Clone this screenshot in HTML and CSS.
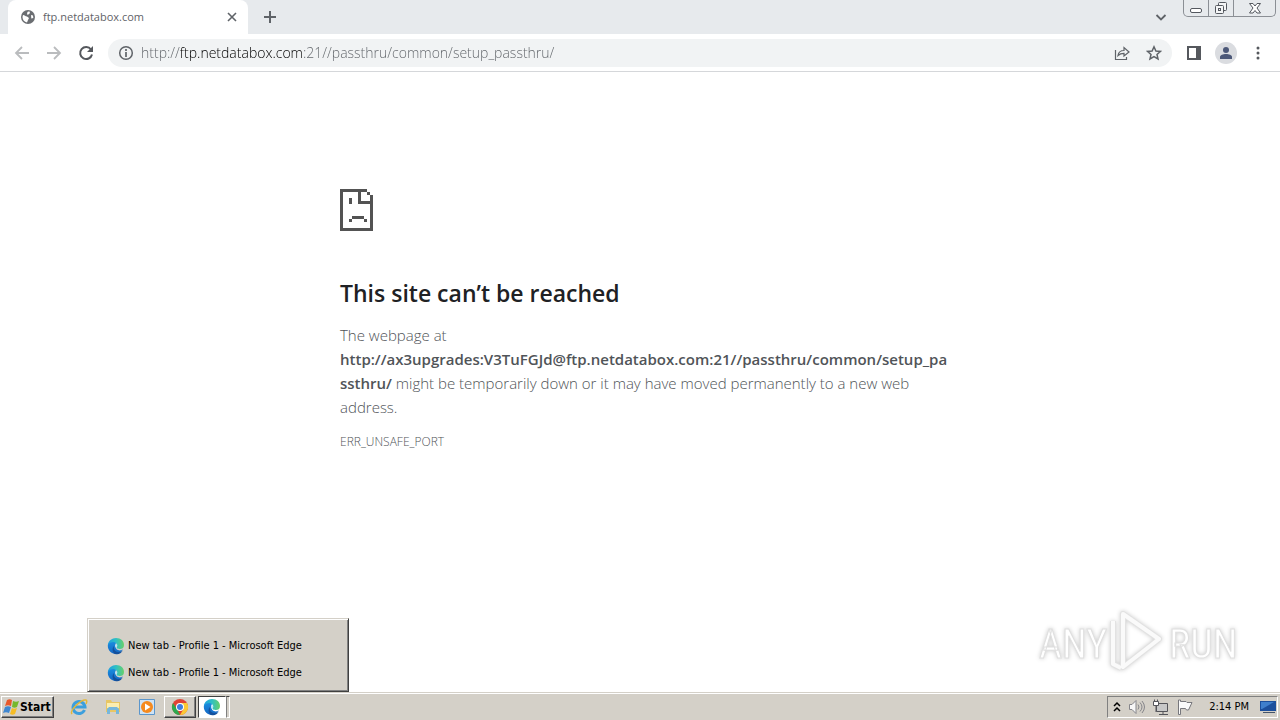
FILE: index.html
```html
<!DOCTYPE html>
<html lang="en">
<head>
    <meta charset="UTF-8">
    <meta name="viewport" content="width=device-width, initial-scale=1.0">
    <title>ftp.netdatabox.com</title>
    <link rel="stylesheet" href="styles.css">
</head>
<body>
    <svg class="defs" aria-hidden="true">
        <defs>
            <linearGradient id="edgeBlue" x1="0" y1="0" x2="0" y2="1">
                <stop offset="0" stop-color="#1a8fe0"/>
                <stop offset="1" stop-color="#1466c4"/>
            </linearGradient>
            <linearGradient id="edgeGreen" x1="0" y1="0" x2="1" y2="0">
                <stop offset="0" stop-color="#1f9fe0"/>
                <stop offset="0.5" stop-color="#2fc0c4"/>
                <stop offset="1" stop-color="#68d068"/>
            </linearGradient>
            <symbol id="edge" viewBox="0 0 18 18">
                <path fill="url(#edgeBlue)" d="M1 7c2-3 6-4 9-2-3 2-2 7 1 8 2 1 4 0 5-1-2 3-4 5-8 5-5-1-8-5-7-10z"/>
                <path fill="#14509c" d="M7 9c-1 4 2 6 5 6 2 0 3-1 4-2-2 4-5 5-8 4-3-2-3-6-1-8z"/>
                <path fill="#b9e3f4" d="M8 8c1-1 3-1 4 0-1 1-1 2 0 3-2 1-4-1-4-3z"/>
                <path fill="url(#edgeGreen)" d="M1 8c0-4 4-7 8-7 5 0 8 3 8 7 0 3-2 4-4 4s-4-1-3-2c1-2 0-4-3-5-3 0-5 1-6 3z"/>
            </symbol>
        </defs>
    </svg>

    <header class="tab-strip">
        <div class="tab">
            <svg viewBox="0 0 14 14" width="14" height="14">
                <circle cx="7" cy="7" r="7" fill="#6b6e72"/>
                <path fill="#fff" d="M2 5c2 0 2 1.500 4 1.500L8 8l-1 2-1 2.500C3.500 12 1.500 10 1.500 7zM7 1.500l2 .3-.5 2L6.500 5 6 3zM10 5l2 .5.3 2.500-2 .5z"/>
            </svg>
            <span class="tab-title">ftp.netdatabox.com</span>
            <button class="icon-button" type="button" aria-label="Close tab">
                <svg viewBox="0 0 16 16" width="16" height="16"><path d="M4 4l8 8M12 4l-8 8" stroke="#5f6368" stroke-width="1.600"/></svg>
            </button>
        </div>
        <button class="icon-button new-tab" type="button" aria-label="New tab">
            <svg viewBox="0 0 16 16" width="16" height="16"><path d="M8 2v12M2 8h12" stroke="#5f6368" stroke-width="2"/></svg>
        </button>
        <button class="icon-button tab-search" type="button" aria-label="Search tabs">
            <svg viewBox="0 0 16 16" width="16" height="16"><path d="M3.500 6l4.500 4.500L12.500 6" fill="none" stroke="#5f6368" stroke-width="1.800"/></svg>
        </button>
        <div class="window-buttons">
            <button type="button" aria-label="Minimize">
                <svg viewBox="0 0 14 14" width="14" height="14"><rect x="1.500" y="7.500" width="11" height="4" rx="1.500" fill="#fff" stroke="#54585f"/></svg>
            </button>
            <button type="button" aria-label="Restore">
                <svg viewBox="0 0 14 14" width="14" height="14" fill="#f4f5f6" stroke="#54585f"><rect x="4.500" y="1.500" width="8" height="8" rx="1"/><rect x="1.500" y="4.500" width="8" height="8" rx="1"/><rect x="4.500" y="7.500" width="2" height="2"/></svg>
            </button>
            <button class="close" type="button" aria-label="Close">
                <svg viewBox="0 0 14 14" width="14" height="14"><path d="M1.500 2.500h3.500l2 2.500 2-2.500h3.500L9 7l3.500 5H9L7 9.500 5 12H1.500L5 7z" fill="#fff" stroke="#54585f"/></svg>
            </button>
        </div>
    </header>

    <nav class="toolbar">
        <button class="icon-button" type="button" aria-label="Back">
            <svg viewBox="0 0 16 16" width="16" height="16"><path d="M15 8H2M8 2L2 8l6 6" fill="none" stroke="#babcbe" stroke-width="1.800"/></svg>
        </button>
        <button class="icon-button" type="button" aria-label="Forward">
            <svg viewBox="0 0 16 16" width="16" height="16"><path d="M1 8h13M8 2l6 6-6 6" fill="none" stroke="#babcbe" stroke-width="1.800"/></svg>
        </button>
        <button class="icon-button" type="button" aria-label="Reload">
            <svg viewBox="0 0 16 16" width="16" height="16"><path d="M13 4.500A6 6 0 1 0 14 9.500" fill="none" stroke="#55585d" stroke-width="2"/><path d="M15 1v6H9z" fill="#55585d"/></svg>
        </button>
        <div class="omnibox">
            <svg viewBox="0 0 16 16" width="16" height="16"><circle cx="8" cy="8" r="6.300" fill="none" stroke="#5f6368" stroke-width="1.500"/><path d="M8 7v5M8 4v2" stroke="#5f6368" stroke-width="1.700"/></svg>
            <input type="text" aria-label="Address" value="http://ftp.netdatabox.com:21//passthru/common/setup_passthru/">
            <button class="icon-button" type="button" aria-label="Share">
                <svg viewBox="0 0 16 16" width="16" height="16" fill="none" stroke="#5f6368" stroke-width="1.200"><path d="M1.500 5v9.500h11V12"/><path d="M4 10.500C4.500 7 7 5.500 10 5.500V2.500L15 7l-5 4V8.300C7.500 8.300 5.500 9 4 10.500z"/></svg>
            </button>
            <button class="icon-button" type="button" aria-label="Bookmark this tab">
                <svg viewBox="0 0 16 16" width="16" height="16"><path d="M8 1.800l1.900 4.200 4.500.4-3.400 3 1 4.500L8 11.500l-4 2.400 1-4.500-3.400-3L6.100 6z" fill="none" stroke="#5f6368" stroke-width="1.500"/></svg>
            </button>
        </div>
        <button class="icon-button" type="button" aria-label="Side panel">
            <svg viewBox="0 0 16 16" width="16" height="16"><path d="M2 2h12v12H2z" fill="none" stroke="#55585d" stroke-width="2"/><path d="M10 2h4v12h-4z" fill="#55585d"/></svg>
        </button>
        <button class="icon-button avatar" type="button" aria-label="Profile">
            <svg viewBox="0 0 22 22" width="22" height="22"><circle cx="11" cy="11" r="11" fill="#dadce0"/><circle cx="11" cy="8" r="3" fill="#4c5878"/><path d="M5 17v-2c0-2 3-3 6-3s6 1 6 3v2z" fill="#4c5878"/></svg>
        </button>
        <button class="icon-button" type="button" aria-label="Menu">
            <svg viewBox="0 0 16 16" width="16" height="16" fill="#55585d"><circle cx="8" cy="3" r="1.500"/><circle cx="8" cy="8" r="1.500"/><circle cx="8" cy="13" r="1.500"/></svg>
        </button>
    </nav>

    <main class="page">
        <div class="error">
            <svg viewBox="0 0 33 42" width="33" height="42" fill="#535353" shape-rendering="crispEdges">
                <path d="M0 0h27v3H3v36h27V15H18V3h3v9h12v30H0zM27 3h3v3h-3zM30 6h3v9h-3zM9 9h3v6H9zM12 27h9v3h-9zM9 30h3v3H9zM21 27h3v3h-3zM24 30h3v3h-3z"/>
            </svg>
            <h1>This site can’t be reached</h1>
            <p>The webpage at <strong>http://ax3upgrades:V3TuFGJd@ftp.netdatabox.com:21//passthru/common/setup_pa<wbr>ssthru/</strong> might be temporarily down or it may have moved permanently to a new web address.</p>
            <div class="error-code">ERR_UNSAFE_PORT</div>
        </div>
    </main>

    <svg class="watermark" viewBox="0 0 204 68" width="204" height="68" role="img" aria-label="ANY RUN">
        <g fill="#fff" stroke="#e0e0e0">
            <text x="3" y="52">ANY</text>
            <text x="133" y="52">RUN</text>
        </g>
        <g fill="none" stroke-linejoin="round">
            <path d="M87 8l36 25-36 28zM77 15v43l8 4" stroke="#e2e2e2" stroke-width="6"/>
            <path d="M87 8l36 25-36 28zM77 15v43l8 4" stroke="#fafafa" stroke-width="4"/>
        </g>
    </svg>

    <footer class="taskbar">
        <button class="start" type="button">
            <svg viewBox="0 0 17 16" width="17" height="16"><path d="M4 1c2-1 3-1 5 0L8 7C6 6 4 6 2 7z" fill="#e8582a"/><path d="M10 2c2 1 4 1 6 0l-2 6c-2 1-3 1-5 0z" fill="#76b82e"/><path d="M2 8c2-1 4-1 6 0l-2 6c-2-1-4-1-6 0z" fill="#3f87d0"/><path d="M9 9c1 1 3 1 5 0l-2 6c-2 1-3 1-5 0z" fill="#f6bd25"/></svg>
            Start
        </button>
        <button class="task first" type="button" aria-label="Internet Explorer">
            <svg viewBox="0 0 18 18" width="18" height="18" fill="none"><path d="M14.500 12A6 6 0 1 1 15 9H5" stroke="#3c9fdd" stroke-width="3"/><path d="M2 16C-1 13 11 1 16 2c1 0 1 2 0 4" stroke="#e5b737" stroke-width="1.500"/></svg>
        </button>
        <button class="task" type="button" aria-label="Windows Explorer">
            <svg viewBox="0 0 18 18" width="18" height="18"><path d="M2 2h5l1 2h8v10H2z" fill="#e8c664"/><path d="M3 5h12v5H3z" fill="#fbedb0"/><path d="M3 16v-5l2-2h8l2 2v5h-3v-4H6v4z" fill="#77b7dc"/></svg>
        </button>
        <button class="task" type="button" aria-label="Media Player">
            <svg viewBox="0 0 18 18" width="18" height="18"><path d="M1.500 1.500h15v15h-15z" fill="#cfe3f5" stroke="#5b96cc"/><circle cx="9" cy="9" r="6" fill="#f58a1f"/><path d="M7 5.500v7L12.500 9z" fill="#fff"/></svg>
        </button>
        <button class="task open" type="button" aria-label="Chrome">
            <svg viewBox="0 0 18 18" width="18" height="18"><circle cx="9" cy="9" r="8" fill="#e04335"/><path d="M2 5l4.500 7L9 17A8 8 0 0 1 2 5z" fill="#2da94f"/><path d="M9 5h7a8 8 0 0 1-7 12l3.500-6z" fill="#fcc934"/><circle cx="9" cy="9" r="4" fill="#fff"/><circle cx="9" cy="9" r="3" fill="#3f7de0"/></svg>
        </button>
        <button class="task active" type="button" aria-label="Microsoft Edge">
            <svg width="18" height="18"><use href="#edge"/></svg>
        </button>
        <span class="stack-edge"></span>

        <div class="preview">
            <a href="#"><svg width="18" height="18"><use href="#edge"/></svg>New tab - Profile 1 - Microsoft Edge</a>
            <a href="#"><svg width="18" height="18"><use href="#edge"/></svg>New tab - Profile 1 - Microsoft Edge</a>
        </div>

        <div class="tray">
            <svg viewBox="0 0 8 12" width="8" height="12"><path d="M1 5l3-3 3 3M1 10l3-3 3 3" fill="none" stroke="#000" stroke-width="1.500"/></svg>
            <svg viewBox="0 0 16 16" width="16" height="16" fill="none" stroke="#85858a"><path d="M.500 5.500H3l4-4v13l-4-4H.500z" fill="#f7f7f7"/><path d="M9 5.500q2 2.500 0 5M11 3.500q4 4.500 0 9M13 2q5 6 0 12"/></svg>
            <svg viewBox="0 0 16 16" width="16" height="16" fill="#c8c8c8" stroke="#55555a"><path d="M3.500 4.500h11v8h-11zM6 15.500h9M10 12.500v3"/><path d="M.500 2.500h5v4h-5zM1.500.500v2M4.500.500v2M3 7v6" fill="#fff"/></svg>
            <svg viewBox="0 0 16 16" width="16" height="16"><path d="M1.500 1v14.500h2V9.500h5l1 1.500h2L15 3.500h-5l-1-1H3.500V1z" fill="#fafafa" stroke="#77777c"/></svg>
            <span class="clock">2:14 PM</span>
            <svg viewBox="0 0 16 16" width="16" height="16"><path d="M0 2h16v10H0z" fill="#1c4f9c"/><path d="M1 3h13L2 10H1z" fill="#3f7fcc"/><path d="M3 13h12v1H3z" fill="#44546a"/></svg>
        </div>
    </footer>
</body>
</html>
```
FILE: styles.css
```css
* {
    box-sizing: border-box;
}

body {
    display: flex;
    flex-direction: column;
    min-height: 100vh;
    margin: 0;
    background-color: #fff;
    font-family: "Open Sans", "Noto Sans", sans-serif;
    color: #5f6368;
}

button {
    padding: 0;
    border: none;
    background: none;
    font-family: inherit;
}

svg {
    flex: none;
    display: block;
}

.defs {
    position: absolute;
    width: 0;
    height: 0;
}

.icon-button {
    display: flex;
    flex: none;
    justify-content: center;
    align-items: center;
    width: 16px;
    height: 24px;
}

/* tabs */
.tab-strip {
    display: flex;
    align-items: center;
    height: 34px;
    padding: 0 4px 0 8px;
    background-color: #e7eaed;
}

.tab {
    display: flex;
    align-items: center;
    gap: 8px;
    width: 240px;
    height: 34px;
    padding: 0 8px 0 13px;
    border-radius: 8px 8px 0 0;
    background-color: #fff;
}

.tab-title {
    flex: 1;
    font-size: 11px;
    line-height: 16px;
}

.new-tab {
    margin-left: 14px;
}

.tab-search {
    margin-left: auto;
}

.window-buttons {
    display: flex;
    align-self: flex-start;
    height: 17px;
    margin-left: 14px;
    border: 1px solid #8b8f95;
    border-top: none;
    border-radius: 0 0 5px 5px;
}

.window-buttons button {
    display: flex;
    justify-content: center;
    align-items: center;
    width: 25px;
}

.window-buttons button:first-child {
    width: 24px;
}

.window-buttons button + button {
    border-left: 1px solid #8b8f95;
}

.window-buttons .close {
    width: 42px;
}

/* toolbar */
.toolbar {
    display: flex;
    align-items: center;
    gap: 16px;
    height: 38px;
    padding: 0 14px;
    border-bottom: 1px solid #d5d7da;
}

.omnibox {
    display: flex;
    flex: 1;
    align-items: center;
    gap: 16px;
    height: 28px;
    margin: 0 -2px;
    padding: 0 10px;
    border-radius: 14px;
    background-color: #f1f3f4;
}

/* scheme and path are grey, the host is dark */
.omnibox input {
    flex: 1;
    min-width: 0;
    margin-left: -9px;
    padding: 0;
    border: none;
    outline: none;
    background: linear-gradient(to right, #5f6368 39px, #000 39px, #000 162px, #5f6368 162px);
    -webkit-background-clip: text;
    background-clip: text;
    -webkit-text-fill-color: transparent;
    font-family: inherit;
    font-size: 14px;
    font-weight: 300;
    line-height: 24px;
}

.avatar {
    width: 22px;
    margin: 0 -3px;
}

/* error page */
.page {
    flex: 1;
    padding: 117px 24px 24px;
}

.error {
    max-width: 600px;
    margin: 0 auto;
}

.error h1 {
    margin: 48px 0 16px;
    font-size: 23px;
    font-weight: 600;
    line-height: 28px;
    color: #202124;
}

.error p {
    margin: 0 0 12px;
    font-size: 15px;
    font-weight: 300;
    line-height: 24px;
    color: #505458;
}

.error strong {
    font-weight: 600;
}

.error-code {
    font-size: 12px;
    font-weight: 300;
    line-height: 22px;
    color: #505458;
}

.watermark {
    position: fixed;
    right: 40px;
    bottom: 46px;
    filter: drop-shadow(0 0 2px #ccc);
}

.watermark text {
    font-family: "Roboto Condensed", "Liberation Sans Narrow", sans-serif;
    font-size: 40px;
}

/* taskbar */
.taskbar {
    position: relative;
    display: flex;
    align-items: center;
    height: 28px;
    padding: 1px 2px 1px 1px;
    border-top: 1px solid #d4d0c8;
    box-shadow: inset 0 1px #fff;
    background-color: #d4d0c8;
    font-family: "DejaVu Sans Condensed", "DejaVu Sans", sans-serif;
    font-size: 11px;
    color: #000;
}

.start,
.task.open {
    border: 1px solid;
    border-color: #fff #404040 #404040 #fff;
    box-shadow: inset -1px -1px #808080;
}

.start {
    display: flex;
    align-items: center;
    width: 53px;
    height: 22px;
    padding-left: 1px;
    font-size: 12px;
    font-weight: bold;
}

.task {
    display: flex;
    justify-content: center;
    align-items: center;
    width: 34px;
    height: 22px;
}

.task.first {
    margin-left: 8px;
}

.task.open {
    width: 32px;
}

.task.active {
    width: 28px;
    margin-left: 2px;
    border: 1px solid;
    border-color: #404040 #fff #fff #404040;
    background-color: #fff;
}

.stack-edge {
    width: 4px;
    height: 22px;
    border: 1px solid #fff;
    border-top-color: #404040;
    border-left-color: #808080;
}

.preview {
    position: absolute;
    left: 87px;
    bottom: 28px;
    display: flex;
    flex-direction: column;
    width: 262px;
    padding: 13px 20px 5px 19px;
    border: 1px solid;
    border-color: #d4d0c8 #404040 #404040 #d4d0c8;
    box-shadow: inset 1px 1px #fff, inset -1px -1px #808080;
    background-color: #d4d0c8;
}

.preview a {
    display: flex;
    align-items: center;
    gap: 3px;
    height: 27px;
    color: #000;
    text-decoration: none;
    white-space: nowrap;
}

.tray {
    display: flex;
    align-items: center;
    gap: 8px;
    height: 22px;
    margin-left: auto;
    padding: 0 1px 0 5px;
    border: 1px solid;
    border-color: #808080 #fff #fff #808080;
}

.tray .clock {
    margin: 0 3px 0 8px;
}
```
